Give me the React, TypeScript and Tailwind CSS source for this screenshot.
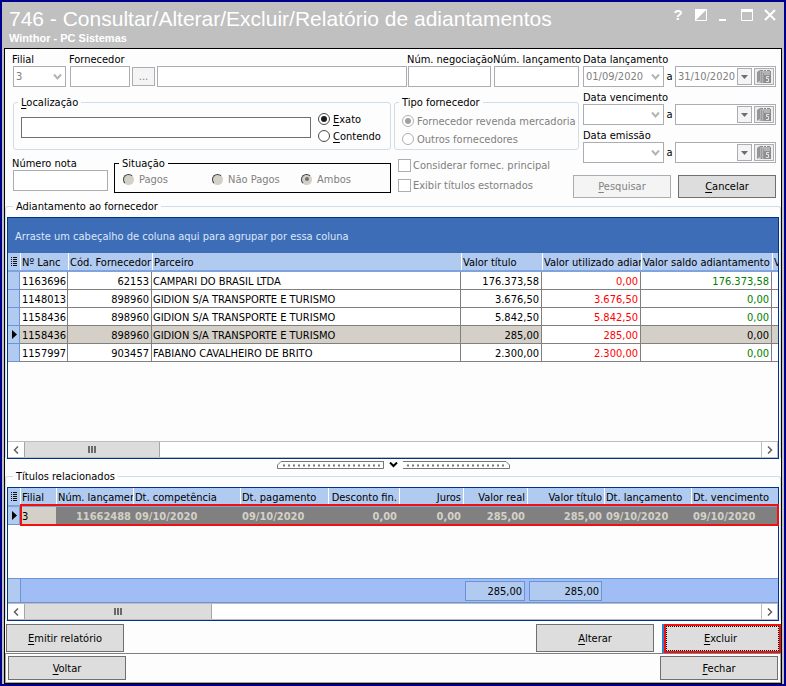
import type { ReactNode } from "react";

const field =
  "block w-full h-[21px] min-w-0 rounded-none border border-[#abadb3] bg-white px-[2px] text-[#808080] outline-none disabled:opacity-100";

function Chevron() {
  return (
    <svg
      className="pointer-events-none absolute right-[4px] top-[7px]"
      width="9"
      height="8"
      viewBox="0 0 9 8"
      fill="none"
      stroke="#b4b4b4"
      strokeWidth="2"
    >
      <path d="M1 1.5 4.5 5.5 8 1.5" />
    </svg>
  );
}

function Combo({ id, value }: { id: string; value: string }) {
  return (
    <div className="relative">
      <select id={id} disabled className={field + " appearance-none"} defaultValue={value}>
        <option value={value}>{value}</option>
      </select>
      <Chevron />
    </div>
  );
}

function Key({ letter, rest }: { letter: string; rest: string }) {
  return (
    <span>
      <span className="underline underline-offset-2">{letter}</span>
      {rest}
    </span>
  );
}

const caption = "block h-[14px] whitespace-nowrap leading-[16px]";

function Labelled({
  id,
  label,
  className,
  children,
}: {
  id: string;
  label: string;
  className: string;
  children: ReactNode;
}) {
  return (
    <div className={className}>
      <label htmlFor={id} className={caption + " -ml-px"}>
        {label}
      </label>
      {children}
    </div>
  );
}

function DateRange({ id, label, from, to }: { id: string; label: string; from: string; to: string }) {
  return (
    <div>
      <label htmlFor={id} className={caption}>
        {label}
      </label>
      <div className="flex items-center">
        <div className="w-[81px]">
          <Combo id={id} value={from} />
        </div>
        <span className="w-[11px] text-center">a</span>
        <div className="flex h-[21px] w-[101px] items-center gap-[2px] border border-[#abadb3] bg-white pr-px">
          <input
            aria-label={label + " final"}
            disabled
            defaultValue={to}
            className="h-full w-0 min-w-0 flex-1 bg-white pl-[2px] text-[#808080]"
          />
          <button
            aria-label="Abrir lista"
            disabled
            className="flex h-[17px] w-[15px] items-center justify-center border border-[#abadb3] bg-[#f4f4f4]"
          >
            <svg width="7" height="4" viewBox="0 0 7 4">
              <path d="M0 0h7L3.500 4z" fill="#6d6d6d" />
            </svg>
          </button>
          <button
            aria-label="Calendário"
            disabled
            className="flex h-[17px] w-[20px] items-center justify-center border border-[#abadb3] bg-[#eeeeee]"
          >
            <svg width="14" height="13" viewBox="0 0 14 13">
              <path d="M0 2 3 0v11l-3 2z" fill="#949494" />
              <path d="M3 1h10v12H2l1-2z" fill="#b4b4b4" />
              <path d="M1.500 2v9M4.500 2v11M6.500 3v10" stroke="#999" />
              <path d="M3 .5h3M7 .5h2M10 .5h3" stroke="#8a8a8a" />
              <path d="M7 5h6v8H7z" fill="#8f8f8f" />
              <path d="M12 6.500H9.500v2h2v3H9" stroke="#e4e4e4" fill="none" />
              <path d="M13.500 1v12" stroke="#8a8a8a" />
            </svg>
          </button>
        </div>
      </div>
    </div>
  );
}

const radio =
  "grid size-[12px] shrink-0 appearance-none place-content-center rounded-full border border-[#4a4a4a] bg-white before:size-[6px] before:rounded-full before:bg-transparent checked:before:bg-[#1c1c1c] disabled:border-[#b0b0b0] disabled:checked:before:bg-[#a0a0a0]";

const radioClassic =
  "grid size-[11px] shrink-0 appearance-none place-content-center rounded-full border border-[#d4d0c8] border-l-[#404040] border-t-[#404040] bg-[#d4d0c8] before:size-[4px] before:rounded-full before:bg-transparent checked:before:bg-[#707070]";

function Option({
  name,
  checked,
  disabled,
  classic,
  children,
}: {
  name: string;
  checked?: boolean;
  disabled?: boolean;
  classic?: boolean;
  children: ReactNode;
}) {
  return (
    <label
      className={
        "flex h-[14px] items-center whitespace-nowrap " +
        (disabled ? "text-[#808080] " : "") +
        (classic ? "gap-[5px]" : "gap-[3px]")
      }
    >
      <input
        type="radio"
        name={name}
        defaultChecked={checked}
        disabled={disabled}
        className={classic ? radioClassic : radio}
      />
      <span className="pt-[2px]">{children}</span>
    </label>
  );
}

function Check({ children }: { children: ReactNode }) {
  return (
    <label className="flex h-[14px] items-center gap-[2px] whitespace-nowrap text-[#808080]">
      <input
        type="checkbox"
        disabled
        className="size-[13px] shrink-0 appearance-none border border-[#abadb3] bg-white"
      />
      <span className="pt-[2px]">{children}</span>
    </label>
  );
}

function Group({ title, className, children }: { title: ReactNode; className: string; children: ReactNode }) {
  return (
    <fieldset className={"min-w-0 border " + className}>
      <legend className={caption + " ml-[4px] px-[3px]"}>{title}</legend>
      {children}
    </fieldset>
  );
}

const button = "flex items-center justify-center border border-[#707070] bg-[#dddddd] pt-px text-black";

function ScrollBar({ thumb }: { thumb: string }) {
  return (
    <div className="flex h-[17px] shrink-0 border-y border-[#bdbdbd] bg-white">
      <button aria-label="Rolar à esquerda" className="flex w-[16px] items-center justify-center">
        <svg width="6" height="8" viewBox="0 0 6 8" fill="none" stroke="#606060" strokeWidth="1.5">
          <path d="M5 .5 1.500 4 5 7.500" />
        </svg>
      </button>
      <div className={"flex items-center justify-center gap-px border-x border-[#a6a6a6] bg-[#dcdcdc] " + thumb}>
        <span className="h-[7px] w-[2px] bg-[#6a6a6a]" />
        <span className="h-[7px] w-[2px] bg-[#6a6a6a]" />
        <span className="h-[7px] w-[2px] bg-[#6a6a6a]" />
      </div>
      <div className="flex-1" />
      <button
        aria-label="Rolar à direita"
        className="flex w-[17px] items-center justify-center border-x border-[#bdbdbd]"
      >
        <svg width="6" height="8" viewBox="0 0 6 8" fill="none" stroke="#606060" strokeWidth="1.5">
          <path d="M1 .5 4.500 4 1 7.500" />
        </svg>
      </button>
    </div>
  );
}

function MenuGlyph() {
  return (
    <svg className="mx-auto block" width="6" height="9" viewBox="0 0 6 9" stroke="#111" shapeRendering="crispEdges">
      <path d="M0 .5h1M2 .5h4M0 2.500h1M2 2.500h4M0 4.500h1M2 4.500h4M0 6.500h1M2 6.500h4M0 8.500h1M2 8.500h4" />
    </svg>
  );
}

function RowArrow() {
  return (
    <svg className="ml-[4px] block" width="5" height="9" viewBox="0 0 5 9">
      <path d="M0 0 5 4.500 0 9z" fill="#000" />
    </svg>
  );
}

const head =
  "overflow-hidden whitespace-nowrap border-b-2 border-b-[#7fa3df] p-0 font-normal text-black";
const headInner = "border-l border-l-white pl-px pr-[2px] pt-[3px] shadow-[-1px_0_0_#6c93d6]";
const cell = "overflow-hidden whitespace-nowrap border-b border-r border-[#808080] pb-0 pl-px pr-[2px] pt-[2px]";
const indicator = "border-b border-r border-[#6f94d4] bg-[#b0caf0] p-0";

const advances = [
  { n: "1163696", cod: "62153", p: "CAMPARI DO BRASIL LTDA", t: "176.373,58", u: "0,00", s: "176.373,58" },
  { n: "1148013", cod: "898960", p: "GIDION S/A TRANSPORTE E TURISMO", t: "3.676,50", u: "3.676,50", s: "0,00" },
  { n: "1158436", cod: "898960", p: "GIDION S/A TRANSPORTE E TURISMO", t: "5.842,50", u: "5.842,50", s: "0,00" },
  { n: "1158436", cod: "898960", p: "GIDION S/A TRANSPORTE E TURISMO", t: "285,00", u: "285,00", s: "0,00", sel: true },
  { n: "1157997", cod: "903457", p: "FABIANO CAVALHEIRO DE BRITO", t: "2.300,00", u: "2.300,00", s: "0,00" },
];

const titles = [
  { label: "Filial", value: "3", right: false },
  { label: "Núm. lançamer", value: "11662488", right: true },
  { label: "Dt. competência", value: "09/10/2020", right: false },
  { label: "Dt. pagamento", value: "09/10/2020", right: false },
  { label: "Desconto fin.", value: "0,00", right: true },
  { label: "Juros", value: "0,00", right: true },
  { label: "Valor real", value: "285,00", right: true },
  { label: "Valor título", value: "285,00", right: true },
  { label: "Dt. lançamento", value: "09/10/2020", right: false },
  { label: "Dt. vencimento", value: "09/10/2020", right: false },
];

function AdvancesTable() {
  return (
    <table className="w-full table-fixed border-separate border-spacing-0">
      <colgroup>
        <col className="w-[12px]" />
        <col className="w-[48px]" />
        <col className="w-[84px]" />
        <col />
        <col className="w-[81px]" />
        <col className="w-[99px]" />
        <col className="w-[131px]" />
        <col className="w-[6px]" />
      </colgroup>
      <thead>
        <tr className="h-[19px] bg-[#b0caf0] text-left">
          <th className={head}>
            <MenuGlyph />
          </th>
          {["Nº Lanc", "Cód. Fornecedor", "Parceiro", "Valor título", "Valor utilizado adiar", "Valor saldo adiantamento", "V"].map(
            (h) => (
              <th key={h} className={head}>
                <div className={headInner}>{h}</div>
              </th>
            ),
          )}
        </tr>
      </thead>
      <tbody>
        {advances.map((r, i) => (
          <tr key={i} className={"h-[18px] " + (r.sel ? "bg-[#d4d0c8]" : "bg-white")}>
            <td className={indicator}>{r.sel && <RowArrow />}</td>
            <td className={cell}>
              <div className="pl-px">{r.n}</div>
            </td>
            <td className={cell + " text-right"}>{r.cod}</td>
            <td className={cell}>{r.p}</td>
            <td className={cell + " text-right"}>{r.t}</td>
            <td className={cell + " bg-white text-right text-[#ff0000]"}>{r.u}</td>
            <td className={cell + " text-right " + (r.sel ? "" : "text-[#008000]")}>{r.s}</td>
            <td className="border-b border-[#808080] p-0" />
          </tr>
        ))}
      </tbody>
    </table>
  );
}

function TitlesTable() {
  return (
    <table className="w-full table-fixed border-separate border-spacing-0">
      <colgroup>
        <col className="w-[12px]" />
        <col className="w-[36px]" />
        <col className="w-[77px]" />
        <col className="w-[107px]" />
        <col className="w-[88px]" />
        <col className="w-[71px]" />
        <col className="w-[64px]" />
        <col className="w-[64px]" />
        <col className="w-[77px]" />
        <col className="w-[87px]" />
        <col />
      </colgroup>
      <thead>
        <tr className="h-[19px] bg-[#b0caf0] text-left">
          <th className={head}>
            <MenuGlyph />
          </th>
          {titles.map((t) => (
            <th key={t.label} className={head}>
              <div className={headInner + (t.right ? " text-right" : "")}>{t.label}</div>
            </th>
          ))}
        </tr>
      </thead>
      <tbody>
        <tr className="h-[18px] bg-[#808080] font-bold text-[#d4d0c8]">
          <td className={indicator}>
            <RowArrow />
          </td>
          {titles.map((t, i) => (
            <td
              key={t.label}
              className={
                "overflow-hidden whitespace-nowrap px-[2px] pb-0 pt-[2px] " +
                (i === 0 ? "bg-[#d4d0c8] font-normal text-black " : "") +
                (t.right ? "text-right" : "")
              }
            >
              {t.value}
            </td>
          ))}
        </tr>
      </tbody>
    </table>
  );
}

function Splitter() {
  return (
    <div className="mt-[2px] flex h-[8px] items-center justify-center gap-[5px]">
      <svg width="107" height="8" viewBox="0 0 107 8" fill="none" stroke="#777">
        <path d="M107 .5H4L.5 4v3.500H106.500V.5" />
        <path d="M6 4.500h99" strokeWidth="2" strokeDasharray="2 3" />
      </svg>
      <svg width="9" height="6" viewBox="0 0 9 6" fill="none" stroke="#000" strokeWidth="2">
        <path d="M1 .5 4.500 4 8 .5" />
      </svg>
      <svg width="107" height="8" viewBox="0 0 107 8" fill="none" stroke="#777">
        <path d="M0 .5h103l3.500 3.500v3.500H0" />
        <path d="M4 4.500h99" strokeWidth="2" strokeDasharray="2 3" />
      </svg>
    </div>
  );
}

function TitleBar() {
  return (
    <header className="flex h-[46px] justify-between bg-[#c0c0c0] pl-[7px] pr-[8px] font-['Liberation_Sans',Arial,sans-serif] text-white">
      <div>
        <h1 className="mt-[5px] whitespace-nowrap text-[21px] leading-[24px]">
          746 - Consultar/Alterar/Excluir/Relatório de adiantamentos
        </h1>
        <p className="text-[11px] font-bold leading-[14px]">Winthor - PC Sistemas</p>
      </div>
      <div className="mt-[5px] flex h-[16px] items-center gap-[11px]">
        <button aria-label="Ajuda" className="w-[12px] text-[15px] font-bold leading-[16px]">
          ?
        </button>
        <button aria-label="Alternar">
          <svg width="12" height="12" viewBox="0 0 12 12">
            <path d="M.5.5h11v11H.5z" fill="none" stroke="#fff" />
            <path d="M0 0h12L0 12z" fill="#fff" />
          </svg>
        </button>
        <button aria-label="Minimizar">
          <svg width="12" height="12" viewBox="0 0 12 12">
            <path d="M1 10h7v2H1z" fill="#fff" />
          </svg>
        </button>
        <button aria-label="Maximizar">
          <svg width="12" height="12" viewBox="0 0 12 12">
            <path d="M.5 1v10.500h11V1" fill="none" stroke="#fff" />
            <path d="M0 0h12v3H0z" fill="#fff" />
          </svg>
        </button>
        <button aria-label="Fechar janela">
          <svg width="12" height="12" viewBox="0 0 12 12" stroke="#fff" strokeWidth="2">
            <path d="M1 1l10 10M11 1 1 11" />
          </svg>
        </button>
      </div>
    </header>
  );
}

function Filters() {
  return (
    <section className="flex h-[150px] gap-[4px] pl-[8px] pr-[5px] pt-[3px]">
      <div className="min-w-0 flex-1">
        <div className="flex items-end">
          <Labelled id="filial" label="Filial" className="mr-[4px] w-[53px]">
            <Combo id="filial" value="3" />
          </Labelled>
          <Labelled id="fornecedor" label="Fornecedor" className="mr-[2px] w-[60px]">
            <input id="fornecedor" disabled className={field} />
          </Labelled>
          <button
            aria-label="Buscar fornecedor"
            disabled
            className="mb-px mr-[2px] h-[19px] w-[23px] border border-[#abadb3] bg-[#f4f4f4] text-[#808080]"
          >
            ...
          </button>
          <div className="mr-px min-w-0 flex-1">
            <input aria-label="Nome do fornecedor" disabled className={field} />
          </div>
          <Labelled id="negociacao" label="Núm. negociação" className="mr-[3px] w-[83px]">
            <input id="negociacao" disabled className={field} />
          </Labelled>
          <Labelled id="lancamento" label="Núm. lançamento" className="w-[85px]">
            <input id="lancamento" disabled className={field} />
          </Labelled>
        </div>

        <div className="mt-2 flex gap-[3px]">
          <Group
            title={<Key letter="L" rest="ocalização" />}
            className="h-[55px] flex-1 rounded-[3px] border-[#d0dce8]"
          >
            <div className="flex items-center gap-[7px] pl-[7px] pr-[9px] pt-[3px]">
              <input
                aria-label="Localização"
                className="h-[21px] min-w-0 flex-1 border border-[#707070] bg-white px-[2px]"
              />
              <div className="flex w-[63px] flex-col gap-[3px]">
                <Option name="modo" checked>
                  <Key letter="E" rest="xato" />
                </Option>
                <Option name="modo">
                  <Key letter="C" rest="ontendo" />
                </Option>
              </div>
            </div>
          </Group>
          <Group title="Tipo fornecedor" className="h-[55px] w-[185px] rounded-[3px] border-[#d0dce8]">
            <div className="flex flex-col gap-[4px] pl-[7px] pt-[5px]">
              <Option name="tipo" checked disabled>
                Fornecedor revenda mercadoria
              </Option>
              <Option name="tipo" disabled>
                Outros fornecedores
              </Option>
            </div>
          </Group>
        </div>

        <div className="mt-[6px] flex">
          <Labelled id="nota" label="Número nota" className="mr-[6px] w-[95px]">
            <input id="nota" disabled className={field} />
          </Labelled>
          <Group title="Situação" className="mr-[7px] h-[37px] flex-1 border-black">
            <div className="grid grid-cols-3 pl-[8px] pt-[2px]">
              <Option name="situacao" disabled classic>
                Pagos
              </Option>
              <Option name="situacao" disabled classic>
                Não Pagos
              </Option>
              <Option name="situacao" checked disabled classic>
                Ambos
              </Option>
            </div>
          </Group>
          <div className="flex w-[181px] flex-col gap-[6px] pt-[2px]">
            <Check>Considerar fornec. principal</Check>
            <Check>Exibir títulos estornados</Check>
          </div>
        </div>
      </div>

      <div className="w-[193px] shrink-0">
        <div className="flex flex-col gap-[3px]">
          <DateRange id="dt-lancamento" label="Data lançamento" from="01/09/2020" to="31/10/2020" />
          <DateRange id="dt-vencimento" label="Data vencimento" from="" to="" />
          <DateRange id="dt-emissao" label="Data emissão" from="" to="" />
        </div>
        <div className="-ml-[10px] mt-3 flex gap-[7px]">
          <button
            disabled
            className="flex h-[23px] flex-1 items-center justify-center border border-[#abadb3] bg-[#f4f4f4] text-[#838383]"
          >
            <Key letter="P" rest="esquisar" />
          </button>
          <button className={button + " h-[23px] flex-1"}>
            <Key letter="C" rest="ancelar" />
          </button>
        </div>
      </div>
    </section>
  );
}

export default function App() {
  return (
    <div className="flex min-h-screen flex-col border-2 border-b-[3px] border-[#00008b] bg-[#c0c0c0] font-['DejaVu_Sans_Condensed','Noto_Sans',sans-serif] text-[11px] leading-[14px] text-black">
      <TitleBar />
      <main className="mx-[2px] flex flex-1 flex-col border border-black bg-[#fdfdfd]">
        <Filters />

        <fieldset className="flex min-w-0 flex-1 flex-col rounded-[3px] border-x border-t border-[#d0dce8] px-px">
          <legend className={caption + " ml-[6px] px-[3px]"}>Adiantamento ao fornecedor</legend>
          <div className="mt-1 flex min-h-[242px] flex-1 flex-col overflow-hidden border border-[#003090] bg-[#fdfdfd]">
            <div className="flex h-[35px] shrink-0 items-center bg-[#3e6db8] pl-[7px] pt-[3px] text-[#dce8fa]">
              Arraste um cabeçalho de coluna aqui para agrupar por essa coluna
            </div>
            <AdvancesTable />
            <div className="flex-1" />
            <ScrollBar thumb="w-[136px]" />
          </div>
        </fieldset>

        <Splitter />

        <fieldset className="flex min-w-0 flex-col rounded-[3px] border-x border-t border-[#d0dce8] px-px">
          <legend className={caption + " ml-[6px] px-[3px]"}>Títulos relacionados</legend>
          <div className="relative mt-1 flex min-h-[134px] flex-col border border-[#003090] bg-[#fdfdfd]">
            <TitlesTable />
            <div className="pointer-events-none absolute -right-px left-[12px] top-[16px] h-[22px] border-2 border-[#f01010]" />
            <div className="flex-1" />
            <div className="flex h-[25px] shrink-0 border-y border-[#6c93d6] bg-[#a0bef5]">
              <div className="w-[13px] border-r border-[#6c93d6] bg-[#b0caf0]" />
              <div className="flex flex-1 items-center">
                <output className="ml-[444px] w-[60px] border border-[#6c93d6] bg-[#b0caf0] px-[2px] pb-px pt-[3px] text-right">
                  285,00
                </output>
                <output className="ml-[4px] w-[73px] border border-[#6c93d6] bg-[#b0caf0] px-[2px] pb-px pt-[3px] text-right">
                  285,00
                </output>
              </div>
            </div>
            <ScrollBar thumb="w-[188px]" />
          </div>
        </fieldset>

        <div className="mt-[3px] flex h-[29px] items-start pl-px">
          <button className={button + " h-[28px] w-[118px]"}>
            <Key letter="E" rest="mitir relatório" />
          </button>
          <button className={button + " ml-auto mr-[8px] h-[28px] w-[118px]"}>
            <Key letter="A" rest="lterar" />
          </button>
          <div className="h-[29px] w-[119px] border-l-2 border-[#2f80d0]">
            <button className="flex size-full items-center justify-center border-2 border-[#f01010] bg-[#dddddd] p-0">
              <span className="flex size-full items-center justify-center border border-dotted border-black pr-1">
                <Key letter="E" rest="xcluir" />
              </span>
            </button>
          </div>
        </div>

        <footer className="flex justify-between border border-[#a8a4a0] border-t-[#808080] px-[2px] py-[2px]">
          <button className={button + " h-[24px] w-[118px]"}>
            <Key letter="V" rest="oltar" />
          </button>
          <button className={button + " h-[24px] w-[118px]"}>
            <Key letter="F" rest="echar" />
          </button>
        </footer>
      </main>
    </div>
  );
}
